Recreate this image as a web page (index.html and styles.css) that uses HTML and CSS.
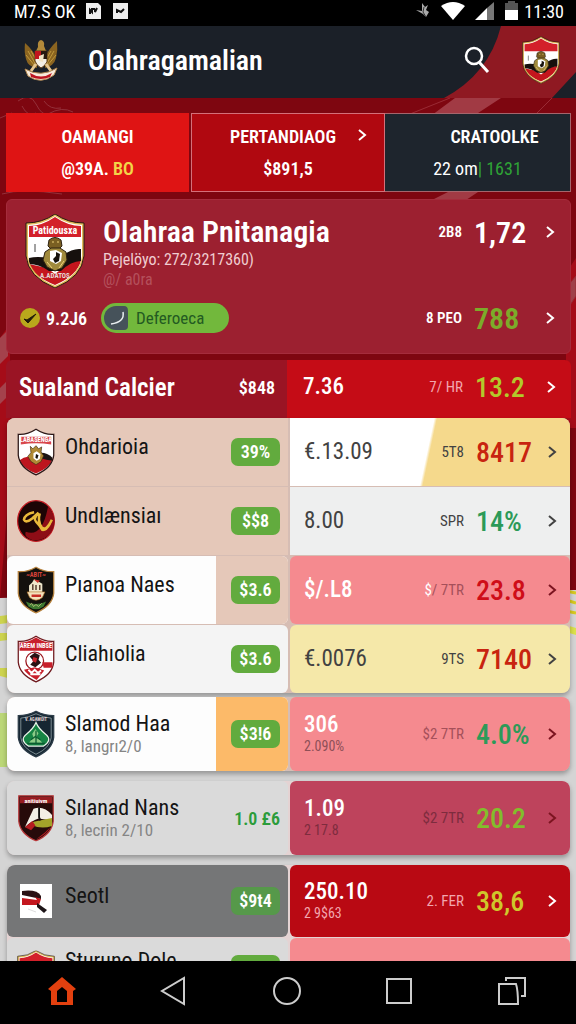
FILE: index.html
```html
<!DOCTYPE html>
<html lang="id">
<head>
    <meta charset="UTF-8">
    <meta name="viewport" content="width=device-width, initial-scale=1.0">
    <title>Olahragamalian</title>
    <link rel="stylesheet" href="styles.css">
</head>
<body>
    <svg class="defs" aria-hidden="true">
        <symbol id="chevron" viewBox="0 0 12 16">
            <path d="M3 3l6 5-6 5" fill="none" stroke="currentColor" stroke-width="2"/>
        </symbol>
        <symbol id="crest" viewBox="0 0 60 74">
            <path d="M30 1Q43 10 58 10V42Q56 62 30 73Q4 62 2 42V10Q17 10 30 1Z" fill="#fff"/>
            <path d="M30 3Q43 12 56 12V23H4V12Q17 12 30 3Z" fill="#d3202a"/>
            <path d="M4 50L22 54 30 60 46 48 56 46Q53 61 30 71Q8 62 4 50Z" fill="#c4161d"/>
            <path d="M4 44Q12 42 24 44L38 41Q48 34 56 35V47Q46 47 36 57L24 57Q14 50 4 50Z" fill="#16100d"/>
            <path d="M30 1Q43 10 58 10V42Q56 62 30 73Q4 62 2 42V10Q17 10 30 1Z" fill="none" stroke="#e0bc5a" stroke-width="2"/>
            <path d="M30 0Q43 9 59 9V42Q57 63 30 74Q3 63 1 42V9Q17 9 30 0Z" fill="none" stroke="#2b1a10" stroke-width="1"/>
            <path d="M24 26q6-5 12 0l1 6-3 3h-8l-3-3Z" fill="#7a5f22" stroke="#2c2110"/>
            <path d="M20 38l6-4h9l6 4 1 8-5 8-7 3-8-4-4-7Z" fill="#a08a3c" stroke="#2c2110"/>
            <path d="M25 37l6-1 6 3-1 8-5 3-6-3Z" fill="#fff"/>
            <path d="M31 38l4 2-1 7-4 2-2-4 3-3Z" fill="#17120c"/>
            <path d="M27 28h2m3 0h2M22 48l5 6m12-7-5 7" stroke="#eed27a" stroke-width="1"/>
            <path d="M10 30v8" stroke="#444" stroke-width="1"/>
        </symbol>
    </svg>

    <div class="status">
        <span>M7.S OK</span>
        <svg width="17" height="18" viewBox="0 0 17 18"><path d="M1 1h12l3 3v13H1z" fill="#eee"/><path d="M5 12V8l2 2V7h3M10 7v3l2-4" fill="none" stroke="#111" stroke-width="2"/></svg>
        <svg width="17" height="18" viewBox="0 0 17 18"><path d="M1 1h15v16H1z" fill="#eee"/><path d="M5 11V8l4 2 3-3" fill="none" stroke="#111" stroke-width="2"/></svg>
        <svg class="push" width="16" height="20" viewBox="0 0 16 20"><path d="M1 9l6 1V2l3 4 3-2-2 5 3 2-3 5-3-3-7-4Z" fill="#aaa"/><path d="M9 6l-1 5 3 5" fill="none" stroke="#333"/></svg>
        <svg width="24" height="20" viewBox="0 0 24 20"><path d="M12 19L0 5Q12-3 24 5Z" fill="#fff"/></svg>
        <svg width="20" height="20" viewBox="0 0 20 20"><path d="M0 19L12 7V19Z" fill="#fff"/><path d="M12 7l7-6V19H12Z" fill="#777"/></svg>
        <svg width="13" height="20" viewBox="0 0 13 20"><path d="M3 0h7v2h3v7H0V2h3z" fill="#555"/><path d="M0 9h13v10H0z" fill="#fff"/></svg>
        <span>11:30</span>
    </div>

    <header class="header">
        <svg class="swoosh" viewBox="0 0 132 72" aria-hidden="true">
            <path d="M57 0H132V46L108 72H0Q45 48 57 0Z" fill="#8f1922"/>
        </svg>
        <svg class="garuda" width="34" height="42" viewBox="0 0 34 42" aria-hidden="true">
            <path d="M1 4Q9 11 13 20L13 29Q4 28 2 20Q0 13 1 4ZM33 2Q24 10 21 20V29Q30 27 32 19Q34 11 33 2Z" fill="#8b6420"/>
            <path d="M4 12l8 14M2 16l9 11M7 12l7 12M30 12l-8 14M32 16l-9 11M27 12l-7 12" stroke="#c19a3c" stroke-width="1"/>
            <path d="M14 8Q13 2 17 1Q21 2 20 7L22 12 12 12Z" fill="#b2893a"/>
            <path d="M11 12H23V23Q20 28 17 29Q12 26 11 22Z" fill="#f4efe5" stroke="#5f3c15"/>
            <path d="M11 12h6v8h-6z" fill="#c1151e"/><path d="M17 12h6v8h-6z" fill="#26180f"/><path d="M15 17l5-2-1 8-4-1z" fill="#f2e4c5"/>
            <path d="M12 25l-5 7M22 25l5 7" stroke="#e5c690" stroke-width="3"/>
            <path d="M1 30Q17 39 33 29L30 36Q17 46 4 37Z" fill="#f8eadb" stroke="#b58a52"/>
            <path d="M6 34Q17 41 28 34L26 38Q17 42 7 38Z" fill="#bd1420"/>
        </svg>
        <h1>Olahragamalian</h1>
        <button class="icon-btn" aria-label="Cari">
            <svg width="26" height="28" viewBox="0 0 26 28"><circle cx="10" cy="10" r="8" fill="none" stroke="#fff" stroke-width="2.5"/><path d="M15 16l9 10" stroke="#fff" stroke-width="3"/></svg>
        </button>
        <svg class="header-crest" width="38" height="48"><use href="#crest"/></svg>
    </header>

    <main class="main">
        <svg class="backdrop" viewBox="0 0 576 863" preserveAspectRatio="xMidYMin slice" aria-hidden="true">
            <path d="M0 0H576V492L0 500Z" fill="#7e0610"/>
            <path d="M0 240L10 226V380L0 500ZM576 160V330H566V175Z" fill="#a50c18"/>
            <path d="M0 240l8-8v26l-8 8zM0 290l8-8v16l-8 8z" fill="#a4424c"/>
            <path d="M455 0h46l-26 17h-43ZM478 94l-15 10h-35l20-10Z" fill="#a13a44"/>
            <path d="M450 0l-40 16M552 0l-15 15M566 190l10-12v20l-10 15Z" fill="#9f4049" stroke="#9a2b35"/>
            <g fill="none" stroke="#94303a">
                <path d="M18 3q12-9 18 3t12 10q14-8 25-2M22 8q6 12 14 7M44 3q6 9 17 7"/>
                <path d="M2 96q20-6 60 0M0 20l12-5"/>
            </g>
            <path d="M0 500l576-8v371H0Z" fill="#d4d4d4"/>
            <path d="M0 518l8-1v8l-8 1zM0 535h8v7l-8 1zM0 570h8v10l-8-2z" fill="#cdd34e"/>
            <path d="M566 493l10 2M566 502l10 3M566 513l10 2" stroke="#d8c91f" stroke-width="3"/>
            <path d="M566 527l10 3v7l-10-3Z" fill="#dce14a"/>
            <path d="M0 615h7v54H0Z" fill="#bbd777"/>
        </svg>

        <nav class="tabs">
            <a href="#dasar" class="tab tab-red">
                <span>OAMANGI</span>
                <span>@39A.<em class="yellow"> BO</em></span>
            </a>
            <a href="#pertandingan" class="tab tab-dark-red">
                <span class="tab-left">PERTANDIAOG</span>
                <span>$891,5</span>
                <svg class="tab-arrow" width="12" height="16"><use href="#chevron"/></svg>
            </a>
            <a href="#kontrol" class="tab tab-navy">
                <span class="tab-shift">CRATOOLKE</span>
                <span class="light">22 om<em class="green">| 1631</em></span>
            </a>
        </nav>

        <section class="hero">
            <div class="hero-row">
                <svg class="hero-crest" width="60" height="74" viewBox="0 0 60 74">
                    <use href="#crest"/>
                    <text x="30" y="20" class="crest-text">Patidousxa</text>
                    <text x="30" y="64" class="crest-small">A.ADATOS</text>
                </svg>
                <div class="hero-info">
                    <h2>Olahraa Pnitanagia</h2>
                    <p>Pejelöyo: 272/3217360)</p>
                    <p class="faded">@/ a0ra</p>
                </div>
                <a href="#odds" class="hero-odds">
                    <span class="unit">2B8</span>
                    <span class="score">1,72</span>
                    <svg width="12" height="16"><use href="#chevron"/></svg>
                </a>
            </div>
            <div class="hero-row hero-bottom">
                <svg width="22" height="22" viewBox="0 0 22 22"><circle cx="11" cy="11" r="10" fill="#b9a81c"/><path d="M5 12l4 4 8-9-9 6Z" fill="#221c0a" stroke="#221c0a"/></svg>
                <strong>9.2J6</strong>
                <button class="pill">
                    <svg width="26" height="26" viewBox="0 0 26 26"><path d="M13 1h8q4 0 4 5v15q0 4-4 4H13A12 12 0 0 1 13 1Z" fill="#46525a"/><path d="M20 7q2 10-12 12" fill="none" stroke="#e8eef0" stroke-width="1.5"/></svg>
                    Deferoeca
                </button>
                <a href="#peo" class="hero-odds">
                    <span class="unit">8 PEO</span>
                    <span class="score green-score">788</span>
                    <svg width="12" height="16"><use href="#chevron"/></svg>
                </a>
            </div>
        </section>

        <div class="section-head">
            <div class="head-left">
                <h2>Sualand Calcier</h2>
                <span>$848</span>
            </div>
            <a href="#calcier" class="odds head-odds">
                <span class="value">7.36</span>
                <span class="unit pink">7/ HR</span>
                <span class="score lime">13.2</span>
                <svg width="12" height="16"><use href="#chevron"/></svg>
            </a>
        </div>

        <div class="group group-first">
            <div class="row">
                <div class="team peach">
                    <svg class="crest" viewBox="0 0 60 74">
                        <path d="M30 1Q44 10 58 9V42Q56 62 30 73Q4 62 2 42V9Q16 10 30 1Z" fill="#fff"/>
                        <path d="M6 13H54V25Q30 21 6 25Z" fill="#d8474c"/>
                        <path d="M4 50Q16 40 27 48L42 41Q50 46 56 48Q53 61 30 71Q8 62 4 50Z" fill="#bd151e"/>
                        <path d="M38 38Q48 38 56 46V51Q46 50 38 47Z" fill="#1b1413"/>
                        <path d="M30 1Q44 10 58 9V42Q56 62 30 73Q4 62 2 42V9Q16 10 30 1Z" fill="none" stroke="#2b1616" stroke-width="2"/>
                        <path d="M21 28l4 4 5-5 4 5 5-3-1 8 4 6-4 9-8 5-8-5-5-8 5-6Z" fill="#b08a35" stroke="#3a2812"/>
                        <path d="M26 39l5-3 6 4-1 8-5 3-5-4Z" fill="#fff"/><path d="M30 40l4 2-2 6-3-2Z" fill="#17120c"/>
                        <text x="30" y="22" class="crest-text">LABASENGA</text>
                    </svg>
                    <div class="name">Ohdarioia</div>
                    <div class="rate"><span class="badge">39%</span></div>
                </div>
                <a href="#t1" class="odds split">
                    <span class="value">€.13.09</span>
                    <span class="unit">5T8</span>
                    <span class="score red">8417</span>
                    <svg width="12" height="16"><use href="#chevron"/></svg>
                </a>
            </div>
            <div class="row">
                <div class="team peach">
                    <svg class="crest" viewBox="0 0 60 66">
                        <ellipse cx="30" cy="33" rx="29" ry="32" fill="#1c0505" stroke="#c41b22" stroke-width="2"/>
                        <path d="M49 10Q66 30 55 49Q43 66 24 63Q10 58 14 50Q40 60 49 10Z" fill="#8d0d16"/>
                        <path d="M27 19Q12 22 11 31Q14 37 24 29L34 20Q25 30 30 34Q36 40 40 47Q46 48 52 37M36 21Q32 33 39 43Q46 50 55 31" fill="none" stroke="#e9b93b" stroke-width="4"/>
                    </svg>
                    <div class="name">Undlænsiaı</div>
                    <div class="rate"><span class="badge">$$8</span></div>
                </div>
                <a href="#t2" class="odds grey">
                    <span class="value">8.00</span>
                    <span class="unit">SPR</span>
                    <span class="score teal">14%</span>
                    <svg width="12" height="16"><use href="#chevron"/></svg>
                </a>
            </div>
            <div class="row">
                <div class="team white">
                    <svg class="crest" viewBox="0 0 60 74">
                        <path d="M30 1Q44 9 58 8V42Q56 62 30 73Q4 62 2 42V8Q16 9 30 1Z" fill="#14110d" stroke="#b6823e" stroke-width="2"/>
                        <text x="30" y="17" class="crest-text crest-red">~ABIT~</text>
                        <path d="M19 30l5-5 3-5 6 3 7 4v14H19Z" fill="#efe7cb"/>
                        <path d="M26 20l10 2-3 4Z" fill="#c9312b"/>
                        <path d="M16 40h28l-4 9q-10 8-20 0Z" fill="#f4e2bd" stroke="#b4762c"/>
                        <path d="M25 28v9m5-8v8m6-8v8" stroke="#3c2013" stroke-width="2"/>
                        <path d="M23 46h15" stroke="#c72e26" stroke-width="4"/>
                        <path d="M14 55q16 8 32 0l-4 8q-12 9-24 0Z" fill="#3e7930"/>
                        <path d="M20 61l3-3 3 5 4-3 4 3 5-5" stroke="#e6d79a" fill="none"/>
                    </svg>
                    <div class="name">Pıanoa Naes</div>
                    <div class="rate peach"><span class="badge">$3.6</span></div>
                </div>
                <a href="#t3" class="odds rose">
                    <span class="value bold">$/.L8</span>
                    <span class="unit"><em>$</em>/ 7TR</span>
                    <span class="score crimson">23.8</span>
                    <svg width="12" height="16"><use href="#chevron"/></svg>
                </a>
            </div>
            <div class="row">
                <div class="team offwhite">
                    <svg class="crest" viewBox="0 0 60 74">
                        <path d="M30 1Q44 10 58 9V42Q56 62 30 73Q4 62 2 42V9Q16 10 30 1Z" fill="#fff" stroke="#6f191d" stroke-width="2"/>
                        <path d="M30 3Q44 12 56 11V24H4V11Q16 12 30 3Z" fill="#c8202b"/>
                        <circle cx="28" cy="40" r="14" fill="#fff" stroke="#9c1820" stroke-width="2"/>
                        <path d="M20 33l8-6 8 4-2 7 4 5-9 7-8-4 5-6Z" fill="#281313"/>
                        <path d="M26 34l6 2-2 7-6-3Z" fill="#c9232b"/>
                        <path d="M40 42h16v9H42ZM11 54l17-4 15 5-12 15Q16 62 11 54Z" fill="#c8202b"/>
                        <path d="M18 54l5 5 5-5 5 5 5-4M21 61h16" stroke="#fff" stroke-width="3" fill="none"/>
                        <text x="30" y="20" class="crest-text">AREM INBSE</text>
                    </svg>
                    <div class="name">Cliahıolia</div>
                    <div class="rate"><span class="badge">$3.6</span></div>
                </div>
                <a href="#t4" class="odds cream">
                    <span class="value">€.0076</span>
                    <span class="unit">9TS</span>
                    <span class="score red">7140</span>
                    <svg width="12" height="16"><use href="#chevron"/></svg>
                </a>
            </div>
        </div>

        <div class="group">
            <div class="row tall">
                <div class="team white">
                    <svg class="crest" viewBox="0 0 60 74">
                        <path d="M30 1Q44 8 58 8V42Q56 62 30 73Q4 62 2 42V8Q16 8 30 1Z" fill="#162632" stroke="#2d3d49" stroke-width="2"/>
                        <path d="M6 12Q18 11 30 5Q42 11 54 12V43Q52 59 30 69Q8 59 6 43Z" fill="none" stroke="#b5c5c6" stroke-width="1"/>
                        <path d="M30 19Q34 29 46 38Q56 47 42 56H18Q4 47 14 38Q26 29 30 19Z" fill="#168444" stroke="#e8f4e8" stroke-width="2"/>
                        <path d="M29 29l5 7-3 5 9 10H19l7-9-2-5Z" fill="#8bcb87"/>
                        <path d="M16 52h28M30 32v19M22 46l7-5 8 5" stroke="#0b5c31" stroke-width="2" fill="none"/>
                        <text x="30" y="16" class="crest-small">V. AGAMOIT</text>
                    </svg>
                    <div class="name">Slamod Haa<small>8, langrı2/0</small></div>
                    <div class="rate orange"><span class="badge">$3!6</span></div>
                </div>
                <a href="#t5" class="odds rose">
                    <span class="value bold">306<small>2.090%</small></span>
                    <span class="unit">$2 7TR</span>
                    <span class="score teal">4.0%</span>
                    <svg width="12" height="16"><use href="#chevron"/></svg>
                </a>
            </div>
        </div>

        <div class="group spaced">
            <div class="row tall">
                <div class="team silver">
                    <svg class="crest" viewBox="0 0 60 78">
                        <path d="M2 3H58V44Q56 65 30 76Q4 65 2 44Z" fill="#270a0a" stroke="#b9383a" stroke-width="2"/>
                        <path d="M4 5H56V15H4Z" fill="#971d22"/>
                        <path d="M12 54L26 24Q42 18 56 34V43L34 40Q22 44 12 54Z" fill="#f3eee6"/>
                        <path d="M26 45L56 39V52Q38 58 22 50Z" fill="#a4a32a"/>
                        <path d="M12 54l12-10 5 7-7 8ZM30 74L45 62 53 54Q48 65 30 74Z" fill="#b51c21"/>
                        <path d="M35 22v16l2 5" stroke="#141010" stroke-width="3" fill="none"/>
                        <text x="30" y="14" class="crest-text">anitiuivm</text>
                    </svg>
                    <div class="name">Sılanad Nans<small>8, lecrin 2/10</small></div>
                    <div class="rate"><span class="plain">1.0 £6</span></div>
                </div>
                <a href="#t6" class="odds plum">
                    <span class="value bold">1.09<small>2 17.8</small></span>
                    <span class="unit">$2 7TR</span>
                    <span class="score lime2">20.2</span>
                    <svg width="12" height="16"><use href="#chevron"/></svg>
                </a>
            </div>
        </div>

        <div class="group spaced">
            <div class="row">
                <div class="team slate">
                    <svg class="crest" viewBox="0 0 38 42">
                        <path d="M3 4h32v34H3z" fill="#fff"/>
                        <path d="M5 11Q20 9 24 16v3L5 15Z" fill="#291114"/>
                        <path d="M5 18l15 2-2-3 6 2-2 6H5Z" fill="#c3161e"/>
                        <path d="M20 23l10 7-3 3-7-6Z" fill="#1d1518"/><path d="M11 29l8 3" stroke="#ddd"/>
                    </svg>
                    <div class="name">Seotl</div>
                    <div class="rate"><span class="badge dim">$9t4</span></div>
                </div>
                <a href="#t7" class="odds scarlet">
                    <span class="value bold">250.10<small>2 9$63</small></span>
                    <span class="unit pink">2. FER</span>
                    <span class="score gold">38,6</span>
                    <svg width="12" height="16"><use href="#chevron"/></svg>
                </a>
            </div>
            <div class="row">
                <div class="team silver">
                    <svg class="crest" viewBox="0 0 60 74"><use href="#crest"/></svg>
                    <div class="name raised">Sturuno Dole</div>
                    <div class="rate raised"><span class="badge"></span></div>
                </div>
                <a href="#t8" class="odds rose" aria-label="Sturuno Dole"></a>
            </div>
        </div>
    </main>

    <nav class="bottom-nav">
        <button aria-label="Beranda"><svg width="30" height="30" viewBox="0 0 30 30"><path d="M15 1l14 12-3 2v14H4V15l-3-2Z" fill="#e2400f"/><path d="M10 26V15l5-4 5 4v11Z" fill="#000"/></svg></button>
        <button aria-label="Kembali"><svg width="30" height="30" viewBox="0 0 30 30"><path d="M24 2v26L2 15Z" fill="none" stroke="#ccc" stroke-width="2"/></svg></button>
        <button aria-label="Utama"><svg width="30" height="30" viewBox="0 0 30 30"><circle cx="15" cy="15" r="13" fill="none" stroke="#ccc" stroke-width="2"/></svg></button>
        <button aria-label="Aplikasi"><svg width="30" height="30" viewBox="0 0 30 30"><path d="M3 3h24v24H3z" fill="none" stroke="#ccc" stroke-width="2"/></svg></button>
        <button aria-label="Terbaru"><svg width="30" height="30" viewBox="0 0 30 30"><path d="M2 8h17q2 6 2 20H2ZM9 5V2h19v18h-4" fill="none" stroke="#ccc" stroke-width="2"/></svg></button>
    </nav>
</body>
</html>
```
FILE: styles.css
```css
*{
    box-sizing: border-box;
}
body{
    margin: 0;
    height: 100vh;
    display: flex;
    flex-direction: column;
    overflow: hidden;
    font-family: "Roboto Condensed", Roboto, "Liberation Sans", sans-serif;
    background-color: black;
    color: white;
}
a{
    color: inherit;
    text-decoration: none;
}
h1, h2, p{
    margin: 0;
}
em{
    font-style: normal;
}
button{
    border: none;
    background: none;
    padding: 0;
    font-family: inherit;
    cursor: pointer;
}
svg{
    flex: none;
}
.defs{
    position: absolute;
    width: 0;
    height: 0;
}

/* status bar and header */
.status{
    height: 26px;
    flex: none;
    display: flex;
    align-items: center;
    gap: 10px;
    padding: 0 12px 4px 14px;
    font-size: 18px;
}
.status .push{
    margin-left: auto;
}
.status span:last-child{
    margin-left: -4px;
}
.header{
    position: relative;
    height: 72px;
    flex: none;
    display: flex;
    align-items: center;
    padding: 0 16px 4px 24px;
    background-color: #1b2028;
}
.header h1{
    flex: 1;
    margin-left: 30px;
    font-size: 28px;
    font-weight: 600;
}
.swoosh{
    position: absolute;
    right: 0;
    top: 0;
    height: 100%;
}
.garuda, .header-crest, .icon-btn{
    position: relative;
}
.icon-btn{
    margin-right: 32px;
    display: flex;
}

/* content */
.main{
    position: relative;
    flex: 1;
    min-height: 0;
    overflow: hidden;
    padding: 15px 5px 0 6px;
    background-color: #d4d4d4;
}
.backdrop{
    position: absolute;
    left: 0;
    top: 0;
    width: 100%;
    height: 100%;
}
.tabs, .hero, .section-head, .group{
    position: relative;
}
.tabs{
    display: grid;
    grid-template-columns: 185fr 194fr 186fr;
    height: 79px;
}
.tab{
    position: relative;
    display: flex;
    flex-direction: column;
    align-items: center;
    justify-content: center;
    gap: 10px;
    font-size: 18px;
    line-height: 22px;
    font-weight: 600;
}
.tab-red{
    background-color: #df1414;
    margin-right: 2px;
}
.tab-dark-red{
    background-color: #b00810;
    border: 1px solid #d4707a;
}
.tab-navy{
    background-color: #1e252d;
    border: 1px solid #a5656c;
    border-left: none;
}
.tab-arrow{
    position: absolute;
    right: 16px;
    top: 13px;
}
.tab-left{
    padding-right: 10px;
}
.tab-shift{
    padding-left: 34px;
}
.light{
    font-weight: 400;
}
.yellow{
    color: #f3d548;
}
.green{
    color: #2fa336;
}
.hero{
    margin-top: 7px;
    height: 155px;
    padding: 14px 14px 0 18px;
    border-radius: 6px;
    background-color: #9c2030;
    border: 1px solid #a52c3c;
}
.hero-row{
    display: flex;
    align-items: flex-start;
}
.hero-info{
    flex: 1;
    margin-left: 18px;
}
.hero h2{
    font-size: 30px;
    line-height: 36px;
    font-weight: 600;
    white-space: nowrap;
}
.hero p{
    font-size: 16px;
    line-height: 20px;
    color: #f0cdd1;
}
.hero .faded{
    color: #b4505c;
}
.hero-odds{
    display: flex;
    align-items: center;
    height: 36px;
    margin-left: auto;
}
.hero-bottom{
    align-items: center;
    margin: 10px 0 0 -6px;
}
.hero-bottom strong{
    width: 60px;
    padding-left: 5px;
    font-size: 18px;
    font-weight: 600;
}
.pill{
    display: flex;
    align-items: center;
    gap: 7px;
    width: 128px;
    height: 30px;
    padding-left: 2px;
    border-radius: 15px;
    background-color: #72b83c;
    color: #235a22;
    font-size: 17px;
}
.unit{
    margin-right: 12px;
    font-size: 15px;
    white-space: nowrap;
}
.score{
    width: 70px;
    font-size: 28px;
    font-weight: 500;
    white-space: nowrap;
}
.hero .unit{
    font-weight: 600;
}
.hero .score{
    font-size: 30px;
    font-weight: 600;
}
.hero .green-score{
    color: #7cab2a;
}
.section-head{
    display: grid;
    grid-template-columns: 281fr 284fr;
    height: 58px;
    margin-top: 6px;
    border-radius: 6px 6px 0 0;
    overflow: hidden;
}
.head-left{
    display: flex;
    align-items: center;
    justify-content: space-between;
    padding: 0 12px 4px 13px;
    background-color: #9a1424;
}
.head-left h2{
    font-size: 25px;
    font-weight: 600;
}
.head-left span{
    font-size: 18px;
    font-weight: 600;
}
.odds{
    display: flex;
    align-items: center;
    padding: 0 12px 0 14px;
    border-radius: 6px;
}
.value{
    flex: 1;
    font-size: 23px;
    line-height: 24px;
}
.head-odds{
    padding: 0 14px 4px 16px;
    border-radius: 0;
    background-color: #c50c16;
}
.head-odds .value, .bold{
    font-weight: 500;
    color: white;
}
.pink{
    color: #f2a6ae;
}
.lime{
    color: #b3c92b;
}

/* team rows */
.group{
    margin: 0 1px 4px 1px;
    border-radius: 8px;
    background-color: #d6bdb4;
    box-shadow: 0 3px 5px rgba(0, 0, 0, 0.3);
    overflow: hidden;
}
.spaced{
    margin-top: 10px;
    background-color: #e4d3d3;
}
.row{
    display: grid;
    grid-template-columns: 281fr 280fr;
    column-gap: 2px;
    height: 68px;
    margin-bottom: 1px;
}
.row:last-child{
    margin-bottom: 0;
}
.spaced .row{
    height: 72px;
}
.tall, .spaced .tall{
    height: 74px;
}
.team{
    display: flex;
    align-items: center;
    padding-left: 10px;
    color: #141414;
    border-radius: 6px;
    overflow: hidden;
}
.crest{
    width: 38px;
    height: 48px;
}
.name{
    flex: 1;
    margin-left: 10px;
    padding-bottom: 10px;
    font-size: 22px;
    line-height: 24px;
    white-space: nowrap;
}
.tall .name{
    padding-bottom: 0;
}
.name small, .value small{
    display: block;
    font-size: 17px;
    line-height: 20px;
    color: #858585;
}
.value small{
    font-size: 14px;
    line-height: 18px;
    font-weight: 400;
    color: #8e4f57;
}
.rate{
    width: 72px;
    align-self: stretch;
    display: flex;
    align-items: center;
    justify-content: flex-end;
    padding-right: 8px;
}
.raised{
    padding-bottom: 26px;
}
.rate.raised{
    padding-bottom: 10px;
}
.badge{
    width: 49px;
    height: 28px;
    border-radius: 7px;
    background-color: #62ab3e;
    color: white;
    font-size: 18px;
    line-height: 28px;
    font-weight: 600;
    text-align: center;
}
.dim{
    background-color: #56994a;
}
.plain{
    color: #2b9c3a;
    font-size: 18px;
    font-weight: 600;
    white-space: nowrap;
}
.peach{
    background-color: #e5c8b9;
}
.white{
    background-color: #fdfdfd;
}
.offwhite{
    background-color: #f4f4f4;
}
.orange{
    background-color: #fcba69;
}
.silver{
    background-color: #dadada;
}
.slate{
    background-color: #757677;
}
.group .odds{
    color: #424242;
}
.group .split{
    background: linear-gradient(102deg, white 49%, #f5d98c 50%);
}
.grey{
    background-color: #eeefef;
}
.group-first .peach, .group .split, .group .grey{
    border-radius: 0;
}
.rose{
    background-color: #f58a8f;
}
.cream{
    background-color: #f5e8a9;
}
.plum{
    background-color: #be435c;
}
.scarlet{
    background-color: #b90913;
}
.group .bold{
    color: white;
}
.rose .unit{
    color: #a5505a;
}
.plum .unit, .plum small{
    color: #7d2c3e;
}
.unit em{
    color: white;
}
.group .scarlet .unit, .scarlet small{
    color: #f2a6ae;
}
.rose > svg, .plum > svg{
    color: #7c1420;
}
.scarlet > svg{
    color: white;
}
.red{
    color: #c82410;
}
.crimson{
    color: #cf0d18;
}
.teal{
    color: #2c9a58;
}
.lime2{
    color: #83bd2c;
}
.gold{
    color: #cfc62b;
}
.crest-text{
    fill: white;
    font-size: 10px;
    font-weight: 700;
    text-anchor: middle;
}
.crest-red{
    fill: #d8423b;
}
.crest-small{
    fill: #e5d9d9;
    font-size: 7px;
    font-weight: 700;
    text-anchor: middle;
}

/* navigation bar */
.bottom-nav{
    height: 63px;
    flex: none;
    display: grid;
    grid-template-columns: repeat(5, 1fr);
    padding: 0 8px 0 6px;
    background-color: black;
}
```
